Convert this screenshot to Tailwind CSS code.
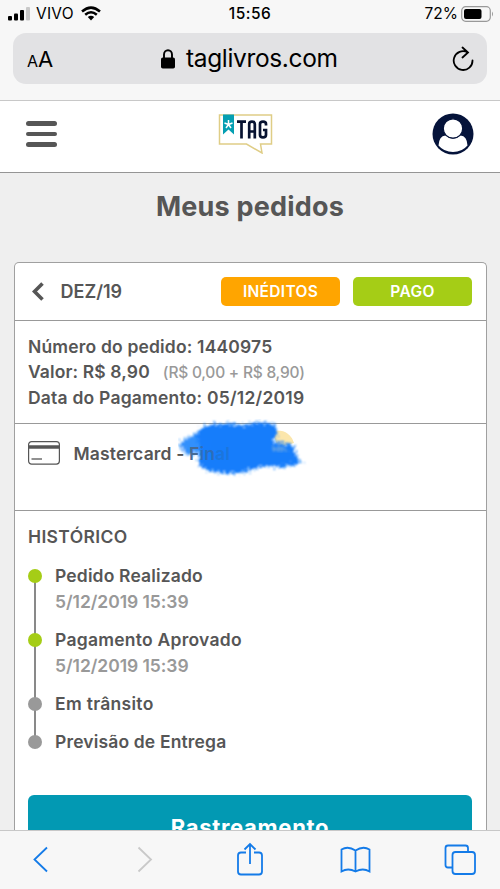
<!DOCTYPE html>
<html lang="pt-BR">
<head>
<meta charset="utf-8">
<title>Meus pedidos</title>
<script src="https://cdn.jsdelivr.net/npm/@tailwindcss/browser@4"></script>
</head>
<body class="h-[889px] w-[500px] overflow-hidden bg-[#efefef] font-['Inter','Liberation_Sans',sans-serif] text-[#565656]">
<div class="flex h-[889px] flex-col overflow-hidden">
  <div class="h-[100.5px] shrink-0 border-b border-[#c8c8c8] bg-[#f7f7f7] text-black">
    <div class="grid h-[33px] grid-cols-3 items-center px-2 pb-[6px]">
      <div class="flex items-center">
        <svg class="h-[15px] w-[22px]" viewBox="0 0 22 15"><rect x="0" y="10" width="4" height="4.5" rx="1"/><rect x="6" y="7.5" width="4" height="7" rx="1"/><rect x="12" y="4" width="4" height="10.500" rx="1"/><rect x="18" y="1" width="4" height="13.500" rx="1" fill="#c9c9c9"/></svg>
        <span class="ml-[6px] text-[15.500px] tracking-[0.200px]">VIVO</span>
        <svg class="ml-[7px] h-[15px] w-[20px]" viewBox="0 0 20 15" fill="none" stroke="#000" stroke-width="2.500"><path d="M1 5.500Q10-2.300 19 5.500M4.200 8.800Q10 3.800 15.800 8.800"/><path d="M6.800 11Q10 8.500 13.200 11L10 14.500Z" fill="#000" stroke="none"/></svg>
      </div>
      <div class="text-center text-[15.500px] font-medium tracking-[0.5px]">15:56</div>
      <div class="-mr-[2px] flex items-center justify-end">
        <span class="text-[15.500px]">72%</span>
        <svg class="ml-[3px] h-[16px] w-[33px]" viewBox="0 0 33 16"><rect x=".7" y=".7" width="28.600" height="14.600" rx="4" fill="none" stroke="#999" stroke-width="1.200"/><rect x="3" y="3" width="17.500" height="10" rx="2"/><path d="M31 5.500Q33 8 31 10.500Z" fill="#999"/></svg>
      </div>
    </div>
    <div class="mx-[13px] flex h-[51px] items-center rounded-[13px] bg-[#e2e2e4] pl-[14px] pr-[13px]">
      <div class="flex w-[134px] items-baseline leading-none"><span class="text-[16px]">A</span><span class="text-[22px]">A</span></div>
      <svg class="h-[20px] w-[14px]" viewBox="0 0 14 20"><rect y="8.500" width="14" height="11" rx="1.800"/><path d="M3 9V5.500a4 4.300 0 0 1 8 0V9" fill="none" stroke="#000" stroke-width="1.900"/></svg>
      <span class="ml-[11px] text-[24.500px] tracking-[-0.350px]">taglivros.com</span>
      <svg class="ml-auto h-[26px] w-[22px]" viewBox="0 0 22 26" fill="none" stroke="#000" stroke-width="1.800" stroke-linecap="round"><path d="M20.500 14.300A9.400 9.400 0 1 1 15.500 6.300M10.500 1.500L16 6.500L10.500 11.500" /></svg>
    </div>
  </div>
  <header class="flex h-[72.500px] shrink-0 items-center justify-between border-b-[1.500px] border-[#959595] bg-white pr-[26px] pl-[26px] pb-[5px]">
    <div class="flex w-[42px] flex-col gap-[6px]"><i class="h-[4.500px] w-[31px] rounded-full bg-[#565656]"></i><i class="h-[4.500px] w-[31px] rounded-full bg-[#565656]"></i><i class="h-[4.500px] w-[31px] rounded-full bg-[#565656]"></i></div>
    <svg class="mr-[9px] h-[41px] w-[55px]" viewBox="0 0 55 41"><path d="M1.500 2H53.500V31H42.500L44 40L28.500 31H1.500Z" fill="#fff" stroke="#dfcd86" stroke-width="1.500"/><path d="M5 1.500H16V21.500L10.500 16.500L5 21.500Z" fill="#049fb2"/><path d="M10.500 11.500V7M10.500 11.500L6.500 10M10.500 11.500L14.500 10M10.500 11.500L8 15M10.500 11.500L13 15" stroke="#fff" stroke-width="1.500"/><g fill="none" stroke="#081331" stroke-width="2.700"><path d="M19 8.700H28M23.500 8V25.500"/><path d="M31.200 25.500V11Q31.200 8.700 34 8.700T36.800 11V25.500M31 18.500H37"/><path d="M48 12.500V11Q48 8.700 45 8.700T42 11V22Q42 24.300 45 24.300T48 22V17H45"/></g></svg>
    <svg class="h-[42px] w-[42px]" viewBox="0 0 42 42"><circle cx="21" cy="21" r="20.500" fill="#05133a"/><path d="M6.500 32.500Q7 23 13.500 22.500Q21 29 28.500 22.500Q35 23 35.500 32.500Q30 39 21 39Q12 39 6.500 32.500Z" fill="#fff"/><circle cx="21" cy="15.500" r="9.700" fill="#fff" stroke="#05133a" stroke-width="1.200"/></svg>
  </header>
  <main class="flex min-h-0 flex-1 flex-col px-[13.500px]">
    <h1 class="flex h-[89px] shrink-0 justify-center pt-[16px] text-[27px] leading-[36px] font-bold tracking-[0.200px]">Meus pedidos</h1>
    <section class="min-h-0 flex-1 rounded-t-[5px] border-[1.500px] border-b-0 border-[#a0a0a0] bg-white">
      <div class="flex h-[57.500px] items-center border-b border-[#999] pr-[13.500px] pl-[17px]">
        <svg class="h-[19px] w-[12px]" viewBox="0 0 12 19" fill="none" stroke="#565656" stroke-width="3.600"><path d="M10.500 1.500L2.500 9.500L10.500 17.500"/></svg>
        <span class="ml-[17px] text-[18px] font-semibold">DEZ/19</span>
        <span class="ml-auto flex h-[29px] w-[119px] items-center justify-center rounded-[5px] bg-[#ffa500] text-[15.500px] font-semibold tracking-[0.300px] text-white">INÉDITOS</span>
        <span class="ml-[13px] flex h-[29px] w-[119px] items-center justify-center rounded-[5px] bg-[#a5cd16] text-[15.500px] font-semibold tracking-[0.400px] text-white">PAGO</span>
      </div>
      <div class="h-[103.500px] border-b border-[#999] px-[13.500px] pt-[13.300px] text-[17.500px] leading-[25.200px] font-semibold">
        <div class="tracking-[0.170px]">Número do pedido: 1440975</div>
        <div class="tracking-[0.120px]">Valor: R$ 8,90<span class="ml-[13px] text-[15.500px] font-medium tracking-[-0.220px] text-[#999]">(R$ 0,00 + R$ 8,90)</span></div>
        <div class="tracking-[0.210px]">Data do Pagamento: 05/12/2019</div>
      </div>
      <div class="relative flex h-[86.500px] items-start border-b border-[#999] px-[13.500px] pt-[17px]">
        <svg class="h-[24px] w-[32px]" viewBox="0 0 32 24" fill="none" stroke="#565656"><rect x=".6" y=".6" width="30.800" height="22.500" rx="3" stroke-width="1.200"/><path d="M.5 6H31.500" stroke-width="3.500"/><path d="M3.500 18H14" stroke-width="1.300"/></svg>
        <span class="relative z-10 ml-[13.500px] text-[17.500px] leading-[26px] font-semibold tracking-[0.150px]">Mastercard - <span class="text-[#466a94]">F</span><span class="text-[#2c6db8]">in</span><span class="text-[#1c75dc]">al</span></span>
        <svg class="absolute left-[163px] top-[-5px] h-[64px] w-[140px]" viewBox="0 0 140 64"><defs><filter id="rough" x="-10%" y="-10%" width="120%" height="120%"><feTurbulence type="fractalNoise" baseFrequency=".5" numOctaves="3" seed="4"/><feDisplacementMap in="SourceGraphic" scale="13" xChannelSelector="R" yChannelSelector="G"/><feGaussianBlur stdDeviation=".9"/></filter></defs>
          <path d="M94 12Q111 9 116 24L100 29Z" fill="#fbe6ac"/>
          <g filter="url(#rough)" fill="#137dfb"><path d="M17 14L29 6L48 4L64 6L80 3L97 5L99 15L94 23L107 24L117 28L117 35L124 44L107 48L90 47L76 50L64 54L49 55L32 52L20 46L21 36L22 27Z"/><path d="M1 24L15 16L34 19L34 31L8 36Z" opacity=".85"/></g>
          <path d="M94 27L108 29L110 33L95 32Z" fill="#8ab5d8" opacity=".55" filter="url(#rough)"/>
        </svg>
      </div>
      <div class="px-[13.500px] pt-[13.500px]">
        <h2 class="text-[17.500px] leading-[26px] font-semibold tracking-[0.350px]">HISTÓRICO</h2>
        <div class="relative mt-[12.500px] text-[17.500px] leading-[26px] font-semibold tracking-[0.150px]">
          <i class="absolute left-[5.500px] top-[13px] h-[167px] w-[2.500px] bg-[#898989]"></i>
          <div class="relative flex h-[64px] gap-[13px]"><i class="mt-[6px] h-[14px] w-[14px] rounded-full bg-[#a5cd16]"></i><div><p>Pedido Realizado</p><p class="tracking-[-0.050px] text-[#999]">5/12/2019 15:39</p></div></div>
          <div class="relative flex h-[64px] gap-[13px]"><i class="mt-[6px] h-[14px] w-[14px] rounded-full bg-[#a5cd16]"></i><div><p class="tracking-[0.250px]">Pagamento Aprovado</p><p class="tracking-[-0.050px] text-[#999]">5/12/2019 15:39</p></div></div>
          <div class="relative flex h-[38.500px] gap-[13px]"><i class="mt-[6px] h-[14px] w-[14px] rounded-full bg-[#999]"></i><p class="tracking-[0.300px]">Em trânsito</p></div>
          <div class="relative flex h-[38px] gap-[13px]"><i class="mt-[6px] h-[14px] w-[14px] rounded-full bg-[#999]"></i><p>Previsão de Entrega</p></div>
        </div>
        <div class="mt-[27.500px] flex h-[66px] items-center justify-center rounded-[6px] bg-[#0299b3] text-[22px] font-bold tracking-[0.700px] text-white">Rastreamento</div>
      </div>
    </section>
  </main>
  <nav class="relative flex h-[59.500px] shrink-0 items-start border-t border-[#c8c8c8] bg-[#f7f7f7]">
    <svg class="h-[58px] w-[500px]" viewBox="0 0 500 58" fill="none" stroke="#147be8" stroke-width="1.800"><path d="M47 16.500L34.500 28.500L47 40.500"/><path d="M138.500 16.500L151 28.500L138.500 40.500" stroke="#c9c9c9"/><path d="M246 21.500H241Q238 21.500 238 24.500V40.500Q238 43.500 241 43.500H259Q262 43.500 262 40.500V24.500Q262 21.500 259 21.500H254M250 33V13M244.500 18.500L250 13L255.500 18.500"/><path d="M355.500 19.500Q348 14.500 341.500 18.500V40.500Q348 36.500 355.500 40.500Q363 36.500 369.500 40.500V18.500Q363 14.500 355.500 19.500V40.500"/><path d="M452 36.500H448Q445.500 36.500 445.500 34V17Q445.500 14.500 448 14.500H465.500Q468 14.500 468 17V20.500"/><rect x="452.500" y="21" width="22.500" height="22" rx="3"/></svg>
  </nav>
</div>
</body>
</html>
